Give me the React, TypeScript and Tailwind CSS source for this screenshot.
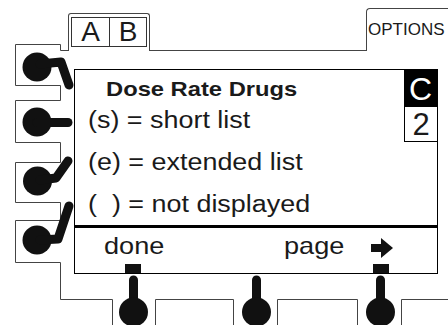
import React from "react";

function Drawing() {
  return (
    <svg
      className="pointer-events-none absolute inset-0"
      width="448"
      height="325"
      viewBox="0 0 448 325"
    >
      {/* housing outline */}
      <g fill="none" stroke="#444" strokeWidth="1">
        <path d="M68.5 50.5H60.5V44.5H15.5V85.5H60.5V100.5H15.5V142.5H60.5V162.5H15.5V202.5H60.5V220.5H15.5V262.5H60.5V299.5H112.5V325" />
        <path d="M149 50.5H367" />
        <path d="M155.5 325V299.5H233.5V325" />
        <path d="M277.5 325V299.5H357.5V325" />
        <path d="M401.5 325V299.5H448" />
      </g>

      {/* side keys */}
      <g fill="#111" stroke="#111" strokeWidth="9" strokeLinecap="round" strokeLinejoin="round">
        <circle cx="37" cy="67" r="14.5" stroke="none" />
        <path d="M40 64L61 62L69 85" fill="none" />
        <circle cx="37" cy="122" r="14.5" stroke="none" />
        <path d="M37 122.5H68" fill="none" />
        <circle cx="37.5" cy="181" r="14.5" stroke="none" />
        <path d="M40 180L56 178L68 161" fill="none" />
        <circle cx="37" cy="240" r="14.5" stroke="none" />
        <path d="M40 240L58 239L69 206" fill="none" />
      </g>

      {/* soft keys */}
      <g fill="#111" stroke="#111" strokeWidth="9" strokeLinecap="round">
        <rect x="125" y="264" width="16" height="9" stroke="none" />
        <rect x="373" y="264" width="16" height="9" stroke="none" />
        <path d="M133.5 280V310" fill="none" />
        <circle cx="133.5" cy="312" r="14.5" stroke="none" />
        <path d="M256.5 280V310" fill="none" />
        <circle cx="256.5" cy="312" r="14.5" stroke="none" />
        <path d="M380.5 280V310" fill="none" />
        <circle cx="380.5" cy="312" r="14.5" stroke="none" />
      </g>
    </svg>
  );
}

function App() {
  return (
    <div className="relative h-[325px] w-[448px] overflow-hidden bg-white font-['Liberation_Sans',Arial,sans-serif] text-[#1a1a1a]">
      <Drawing />

      {/* tabs */}
      <div className="flex h-[69px] items-start">
        <div className="ml-[68px] mt-[13px] h-[38px] w-[82px] rounded-t-[3px] border-x border-t border-[#444] pl-[2px] pt-[3px]">
          <div className="flex h-[30px] w-[76px] border border-[#333] text-[28px] leading-[28px]">
            <div className="flex w-[38px] items-center justify-center border-r border-[#333]">A</div>
            <div className="flex flex-1 items-center justify-center">B</div>
          </div>
        </div>
        <div className="ml-auto mt-[8px] h-[43px] w-[82px] rounded-tl-[4px] border-l border-t border-[#444] pl-[1px] pt-[12px] text-[17px] leading-[17px]">
          OPTIONS
        </div>
      </div>

      {/* screen */}
      <div className="ml-[74px] flex h-[205px] w-[364px] flex-col border border-black">
        <div className="flex h-[155px]">
          <div className="flex flex-1 flex-col">
            <div className="mt-[9px] h-[20px] pl-[31px] text-[21px] font-bold leading-[20px]">
              <span className="inline-block origin-left scale-x-[1.13]">Dose Rate Drugs</span>
            </div>
            <div className="h-[42px] pl-[13px] text-[23px] leading-[42px]">
              <span className="inline-block origin-left scale-x-[1.17]">(s) = short list</span>
            </div>
            <div className="h-[42px] pl-[13px] text-[23px] leading-[42px]">
              <span className="inline-block origin-left scale-x-[1.17]">(e) = extended list</span>
            </div>
            <div className="h-[42px] pl-[13px] text-[23px] leading-[42px] whitespace-pre">
              <span className="inline-block origin-left scale-x-[1.17]">(  ) = not displayed</span>
            </div>
          </div>
          <div className="flex w-[33px] flex-col">
            <div className="flex h-[37px] items-center justify-center bg-black text-[32px] leading-[32px] text-white">
              C
            </div>
            <div className="flex h-[35px] items-center justify-center border-b border-l border-black text-[31px] leading-[31px]">
              2
            </div>
          </div>
        </div>
        <div className="h-[3px] bg-black" />
        <div className="flex h-[45px] items-start text-[24px] leading-[36px]">
          <div className="ml-[29px] w-[180px]">
            <span className="inline-block origin-left scale-x-[1.13]">done</span>
          </div>
          <div className="w-[87px]">
            <span className="inline-block origin-left scale-x-[1.13]">page</span>
          </div>
          <svg className="mt-[10px]" width="22" height="20" viewBox="0 0 22 20">
            <rect x="0" y="6" width="12" height="8" fill="#111" />
            <polygon points="10,0 22,10 10,20" fill="#111" />
          </svg>
        </div>
      </div>
    </div>
  );
}

export default App;
